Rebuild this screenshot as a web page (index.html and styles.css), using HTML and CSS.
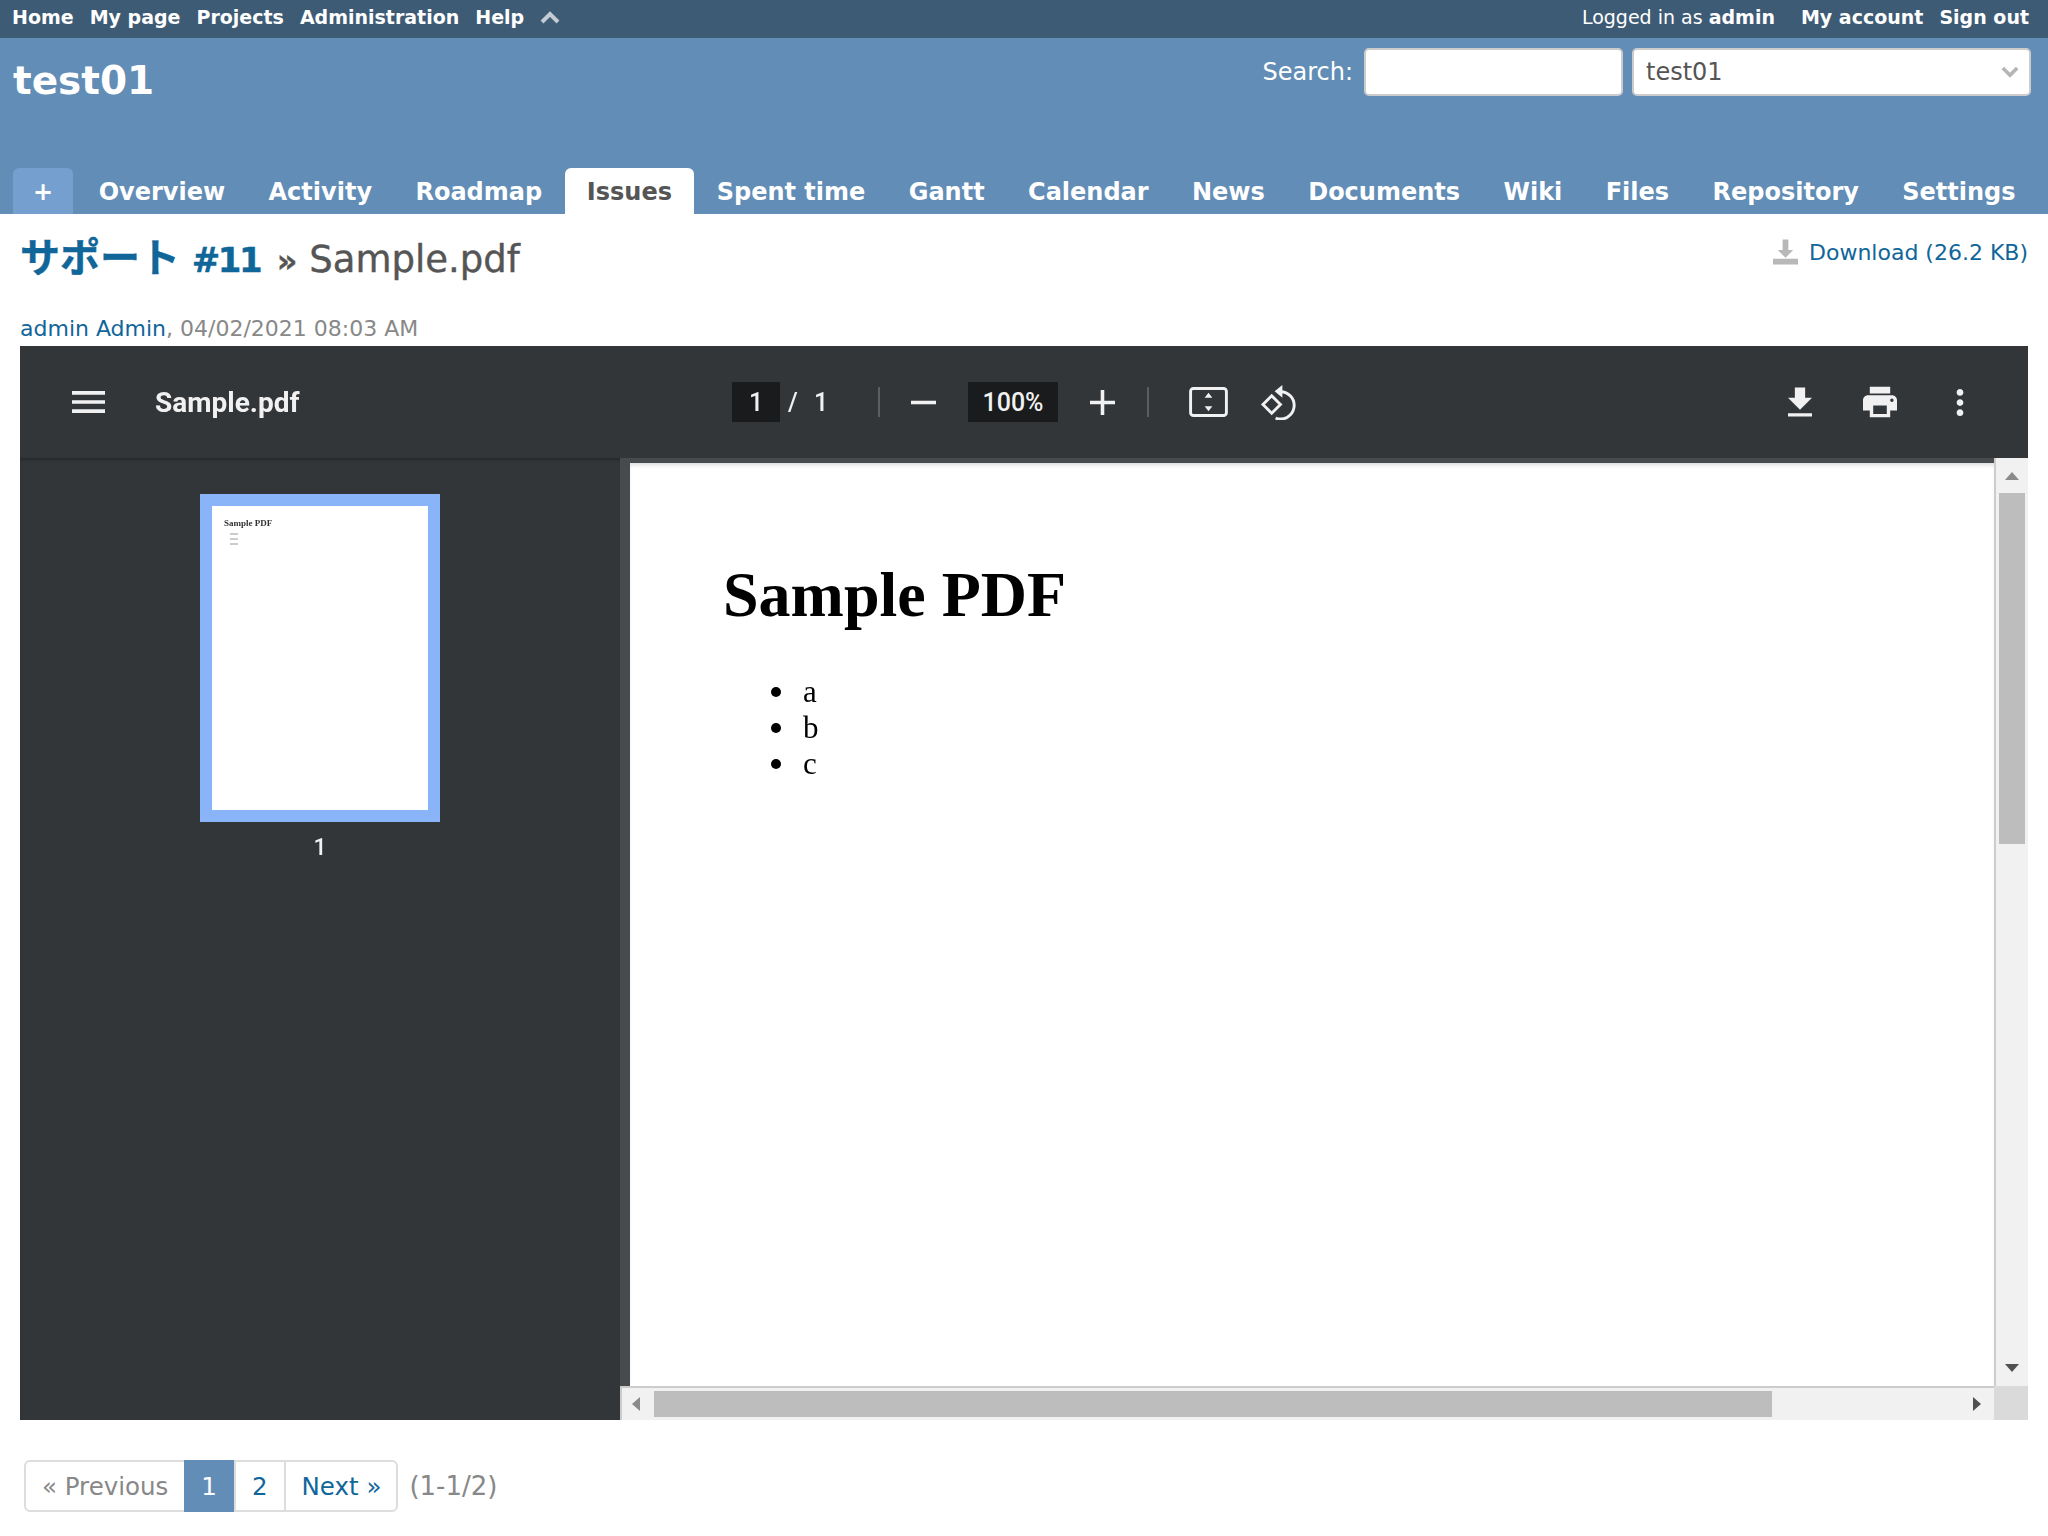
FILE: index.html
```html
<!DOCTYPE html>
<html lang="en">
<head>
    <meta charset="UTF-8">
    <meta name="viewport" content="width=device-width, initial-scale=1.0">
    <link rel="stylesheet" href="styles.css">
    <title>Sample.pdf - test01</title>
</head>
<body>
    <div class="top-menu">
        <nav class="top-links">
            <a href="#">Home</a>
            <a href="#">My page</a>
            <a href="#">Projects</a>
            <a href="#">Administration</a>
            <a href="#">Help</a>
            <svg class="top-chevron" viewBox="0 0 20 13"><path d="M2 11 L10 3 L18 11" /></svg>
        </nav>
        <div class="account">
            <span class="logged-as">Logged in as <b>admin</b></span>
            <a href="#">My account</a>
            <a href="#">Sign out</a>
        </div>
    </div>

    <header class="header">
        <div class="header-top">
            <h1>test01</h1>
            <div class="quick-search">
                <label for="q">Search:</label>
                <input id="q" type="text">
                <div class="jump-box">
                    <span>test01</span>
                    <svg viewBox="0 0 20 13"><path d="M2 2 L10 10 L18 2" /></svg>
                </div>
            </div>
        </div>
        <nav class="tabs">
            <a class="tab new-tab" href="#">+</a>
            <a class="tab" href="#">Overview</a>
            <a class="tab" href="#">Activity</a>
            <a class="tab" href="#">Roadmap</a>
            <a class="tab selected" href="#">Issues</a>
            <a class="tab" href="#">Spent time</a>
            <a class="tab" href="#">Gantt</a>
            <a class="tab" href="#">Calendar</a>
            <a class="tab" href="#">News</a>
            <a class="tab" href="#">Documents</a>
            <a class="tab" href="#">Wiki</a>
            <a class="tab" href="#">Files</a>
            <a class="tab" href="#">Repository</a>
            <a class="tab" href="#">Settings</a>
        </nav>
    </header>

    <main class="content">
        <div class="title-row">
            <h2><a href="#"><span class="tracker">サポート</span> <span class="issue-no">#11</span></a> <span class="crumb">»</span> Sample.pdf</h2>
            <a class="download-link" href="#">
                <svg viewBox="0 0 26 26"><path d="M10 0h6v11h5l-8 8-8-8h5z" /><rect x="0" y="20" width="26" height="6" /></svg>
                Download (26.2 KB)
            </a>
        </div>
        <p class="attachment-meta"><a href="#">admin Admin</a>, 04/02/2021 08:03 AM</p>

        <section class="viewer">
            <div class="pdf-toolbar">
                <div class="pdf-title">
                    <svg class="ic-menu" viewBox="3 6 18 12"><path d="M3 18h18v-2H3v2zm0-5h18v-2H3v2zm0-7v2h18V6H3z" /></svg>
                    <span>Sample.pdf</span>
                </div>
                <div class="pdf-controls">
                    <span class="page-box">1</span>
                    <span class="page-slash">/</span>
                    <span class="page-total">1</span>
                    <span class="pdf-sep first"></span>
                    <svg class="ic-zoom" viewBox="5 5 14 14"><path d="M19 13H5v-2h14v2z" /></svg>
                    <span class="zoom-box">100%</span>
                    <svg class="ic-zoom" viewBox="5 5 14 14"><path d="M19 13h-6v6h-2v-6H5v-2h6V5h2v6h6v2z" /></svg>
                    <span class="pdf-sep"></span>
                    <svg class="ic-fit" viewBox="0 0 40 31">
                        <rect x="1.5" y="1.5" width="37" height="28" rx="3" fill="none" stroke="#f1f1f1" stroke-width="3" />
                        <path d="M20 6l4 5h-8zM20 25l4-5h-8z" fill="#f1f1f1" />
                    </svg>
                    <svg class="ic-rotate" viewBox="0 0 36 36">
                        <polygon points="2,20 11,11 20,20 11,29" fill="none" stroke="#f1f1f1" stroke-width="3" />
                        <path d="M19 7 A14 14 0 1 1 15 34" fill="none" stroke="#f1f1f1" stroke-width="3" />
                        <path d="M22 0v13l-8-6.500z" fill="#f1f1f1" />
                    </svg>
                </div>
                <div class="pdf-actions">
                    <svg class="ic-download" viewBox="5 3 14 17"><path d="M19 9h-4V3H9v6H5l7 7 7-7zM5 18v2h14v-2H5z" /></svg>
                    <svg class="ic-print" viewBox="2 3 20 18"><path d="M19 8H5c-1.66 0-3 1.34-3 3v6h4v4h12v-4h4v-6c0-1.66-1.34-3-3-3zm-3 11H8v-5h8v5zm3-7c-.55 0-1-.45-1-1s.45-1 1-1 1 .45 1 1-.45 1-1 1zm-1-9H6v4h12V3z" /></svg>
                    <svg class="ic-more" viewBox="10 4 4 16"><path d="M12 8c1.1 0 2-.9 2-2s-.9-2-2-2-2 .9-2 2 .9 2 2 2zm0 2c-1.1 0-2 .9-2 2s.9 2 2 2 2-.9 2-2-.9-2-2-2zm0 6c-1.1 0-2 .9-2 2s.9 2 2 2 2-.9 2-2-.9-2-2-2z" /></svg>
                </div>
            </div>

            <div class="pdf-body">
                <aside class="thumbs">
                    <div class="thumb">
                        <div class="thumb-page">
                            <strong>Sample PDF</strong>
                            <i></i><i></i><i></i>
                        </div>
                    </div>
                    <span class="thumb-num">1</span>
                </aside>

                <div class="pdf-main">
                    <div class="pdf-row">
                        <div class="pdf-page">
                            <h3>Sample PDF</h3>
                            <ul>
                                <li>a</li>
                                <li>b</li>
                                <li>c</li>
                            </ul>
                        </div>
                        <div class="vscroll">
                            <span class="arrow up"></span>
                            <span class="vthumb"></span>
                            <span class="arrow down"></span>
                        </div>
                    </div>
                    <div class="hscroll">
                        <span class="arrow left"></span>
                        <span class="hthumb"></span>
                        <span class="arrow right"></span>
                        <span class="corner"></span>
                    </div>
                </div>
            </div>
        </section>

        <div class="pagination">
            <ul class="pages">
                <li class="prev">« Previous</li>
                <li class="current">1</li>
                <li><a href="#">2</a></li>
                <li class="next"><a href="#">Next »</a></li>
            </ul>
            <span class="items">(1-1/2)</span>
        </div>
    </main>
</body>
</html>
```

FILE: styles.css
```css
*, ::after, ::before{
    margin: 0;
    padding: 0;
    box-sizing: border-box;
}
body{
    font-family: 'DejaVu Sans', 'Noto Sans CJK JP', sans-serif;
    font-size: 22px;
    color: #333;
    background: #fff;
    overflow: hidden;
}
a{
    color: #169;
    text-decoration: none;
}

/* top bar */
.top-menu{
    height: 38px;
    padding: 0 19px 4px 12px;
    display: flex;
    justify-content: space-between;
    align-items: center;
    background: #3e5b76;
    color: #fff;
    font-size: 19px;
    a{
        color: #fff;
        font-weight: bold;
    }
}
.top-links{
    display: flex;
    align-items: center;
    gap: 16px;
}
.top-chevron{
    width: 20px;
    height: 13px;
    path{
        fill: none;
        stroke: #c3ccd4;
        stroke-width: 4;
    }
}
.account{
    display: flex;
    gap: 16px;
}
.logged-as{
    margin-right: 10px;
}

/* header */
.header{
    height: 176px;
    padding: 10px 17px 0 13px;
    display: flex;
    flex-direction: column;
    justify-content: space-between;
    background: #628db6;
    color: #fff;
}
.header-top{
    display: flex;
    justify-content: space-between;
    align-items: flex-start;
    h1{
        font-size: 39px;
        line-height: 52px;
        margin-top: 7px;
    }
}
.quick-search{
    display: flex;
    align-items: center;
    label{
        margin-right: 11px;
        font-size: 24px;
    }
    input{
        width: 259px;
        height: 48px;
        margin-right: 9px;
        border: 2px solid #ccc;
        border-radius: 5px;
        background: #fff;
    }
}
.jump-box{
    width: 399px;
    height: 48px;
    padding: 0 10px 0 12px;
    display: flex;
    justify-content: space-between;
    align-items: center;
    border: 2px solid #ccc;
    border-radius: 5px;
    background: #fff;
    color: #555;
    font-size: 24px;
    svg{
        width: 18px;
        height: 12px;
    }
    path{
        fill: none;
        stroke: #b5b5b5;
        stroke-width: 4;
    }
}
.tabs{
    display: flex;
    gap: 2px;
}
.tab{
    height: 46px;
    padding: 2px 20.700px 0;
    display: flex;
    flex: none;
    align-items: center;
    border-radius: 6px 6px 0 0;
    color: #fff;
    font-size: 24px;
    font-weight: bold;
    white-space: nowrap;
}
.new-tab{
    width: 60px;
    padding: 2px 0 0;
    margin-right: 3px;
    justify-content: center;
    background: #759fcf;
}
.selected{
    padding: 2px 22px 0;
    background: #fff;
    color: #555;
}

/* main */
.content{
    padding: 0 20px;
}
.title-row{
    height: 106px;
    padding-top: 19px;
    display: flex;
    justify-content: space-between;
    align-items: flex-start;
    h2{
        font-size: 37px;
        font-weight: normal;
        line-height: 50px;
        color: #555;
        -webkit-text-stroke: 0.4px;
    }
}
.tracker{
    font-size: 40px;
    font-weight: bold;
}
.issue-no{
    font-size: 34px;
    font-weight: bold;
    letter-spacing: -2.500px;
    margin-right: 5px;
}
.crumb{
    font-size: 32px;
    font-weight: bold;
}
.download-link{
    display: flex;
    align-items: center;
    gap: 11px;
    margin-top: 6px;
    font-size: 22px;
    svg{
        width: 25px;
        height: 26px;
        fill: #b8b8b8;
    }
}
.attachment-meta{
    height: 26px;
    line-height: 26px;
    margin-top: -4px;
    margin-bottom: 4px;
    color: #888;
    font-size: 22px;
}

/* pdf viewer */
.viewer{
    height: 1074px;
    background: #323639;
    font-family: Roboto, sans-serif;
    color: #f1f1f1;
}
.pdf-toolbar{
    height: 112px;
    padding-left: 52px;
    display: flex;
    align-items: center;
    svg{
        fill: #f1f1f1;
        flex: none;
    }
}
.pdf-title{
    width: 660px;
    display: flex;
    align-items: center;
    gap: 50px;
    font-size: 28px;
    font-weight: bold;
}
.pdf-title, .pdf-controls, .pdf-actions, .thumb-page strong, .thumb-num, .pdf-page h3, .pdf-page ul{
    filter: blur(0.6px);
}
.ic-menu{
    width: 33px;
    height: 24px;
}
.pdf-controls{
    display: flex;
    align-items: center;
    font-size: 25px;
    font-weight: 500;
}
.page-box, .zoom-box{
    height: 40px;
    display: flex;
    align-items: center;
    justify-content: center;
    background: #191b1c;
}
.page-box{
    width: 48px;
}
.page-slash{
    margin-left: 8px;
    width: 22px;
}
.page-total{
    width: 16px;
    margin-left: 4px;
}
.pdf-sep{
    width: 2px;
    height: 30px;
    margin-left: 32px;
    background: #5b5e61;
}
.pdf-sep.first{
    margin-left: 48px;
}
.ic-zoom{
    width: 25px;
    height: 25px;
    margin-left: 31px;
}
.zoom-box{
    width: 90px;
    margin-left: 32px;
}
.zoom-box + .ic-zoom{
    margin-left: 32px;
}
.ic-fit{
    width: 39px;
    height: 30px;
    margin-left: 40px;
}
.ic-rotate{
    width: 35px;
    height: 35px;
    margin-left: 33px;
}
.pdf-actions{
    margin-left: 492px;
    display: flex;
    align-items: center;
}
.ic-download{
    width: 24px;
    height: 30px;
}
.ic-print{
    width: 34px;
    height: 32px;
    margin-left: 51px;
}
.ic-more{
    width: 8px;
    height: 27px;
    margin-left: 59px;
}
.pdf-body{
    height: 962px;
    display: flex;
    box-shadow: inset 0 3px 3px -1px rgba(0, 0, 0, 0.25);
}
.thumbs{
    width: 600px;
    padding-top: 36px;
    display: flex;
    flex-direction: column;
    align-items: center;
    flex: none;
}
.thumb{
    width: 240px;
    height: 328px;
    padding: 12px;
    background: #8ab4f8;
}
.thumb-page{
    height: 304px;
    padding: 13px 12px;
    display: flex;
    flex-direction: column;
    background: #fff;
    strong{
        font-family: 'Liberation Serif', serif;
        font-size: 9px;
        line-height: 8px;
        margin-bottom: 6px;
        color: #333;
    }
    i{
        width: 8px;
        height: 2px;
        margin: 0 0 3px 6px;
        background: #ccc;
    }
}
.thumb-num{
    margin-top: 12px;
    font-size: 23px;
    font-weight: 500;
}
.pdf-main{
    flex: 1;
    display: flex;
    flex-direction: column;
    background: #474b4e;
}
.pdf-row{
    height: 928px;
    display: flex;
}
.pdf-page{
    flex: 1;
    margin: 5px 0 0 10px;
    padding: 95px 0 0 93px;
    background: #fff;
    box-shadow: inset 0 4px 4px -2px rgba(0, 0, 0, 0.15);
    font-family: 'Liberation Serif', serif;
    color: #000;
    h3{
        font-size: 64px;
        line-height: 74px;
    }
    ul{
        margin-top: 42px;
        padding-left: 48px;
        list-style: none;
        font-size: 31px;
        line-height: 36px;
    }
    li{
        display: flex;
        align-items: center;
    }
    li::before{
        content: '';
        width: 10px;
        height: 10px;
        margin-right: 22px;
        border-radius: 50%;
        background: #000;
    }
}
.vscroll{
    width: 34px;
    padding: 0 4px;
    display: flex;
    flex-direction: column;
    align-items: center;
    flex: none;
    background: #f1f1f1;
    border-left: 2px solid #ccc;
    .up{
        margin-top: 14px;
    }
}
.vthumb{
    width: 26px;
    height: 351px;
    margin-top: 13px;
    background: #bdbdbd;
}
.vscroll .down{
    margin-top: auto;
    margin-bottom: 14px;
}
.arrow{
    flex: none;
    width: 0;
    height: 0;
    border: 7px solid transparent;
}
.up{
    border-top: 0;
    border-bottom: 8px solid #8a8a8a;
}
.down{
    border-bottom: 0;
    border-top: 8px solid #505050;
}
.left{
    border-left: 0;
    border-right: 8px solid #8a8a8a;
}
.right{
    border-right: 0;
    border-left: 8px solid #505050;
}
.hscroll{
    height: 34px;
    padding-left: 10px;
    display: flex;
    align-items: center;
    background: #f1f1f1;
    border-top: 2px solid #ccc;
    border-left: 2px solid #ccc;
}
.hthumb{
    width: 1118px;
    height: 26px;
    margin-left: 14px;
    background: #bdbdbd;
}
.right{
    margin-left: 201px;
}
.corner{
    width: 34px;
    height: 34px;
    margin-left: auto;
    margin-top: -2px;
    background: #dadada;
}

/* pagination */
.pagination{
    margin: 40px 0 0 4px;
    display: flex;
    align-items: center;
    gap: 11px;
    font-size: 24.500px;
    color: #888;
}
.items{
    font-size: 26px;
}
.pages{
    display: flex;
    height: 52px;
    list-style: none;
    border: 2px solid #ddd;
    border-radius: 6px;
    li{
        padding: 0 16px;
        display: flex;
        align-items: center;
        border-left: 2px solid #ddd;
    }
    .prev{
        padding: 0 16px;
        border-left: 0;
    }
    .current{
        margin: -2px 0;
        padding: 0 17px;
        background: #628db6;
        color: #fff;
        border-left: 0;
    }
    .next{
        padding: 0 15px 0 16px;
    }
}
```
